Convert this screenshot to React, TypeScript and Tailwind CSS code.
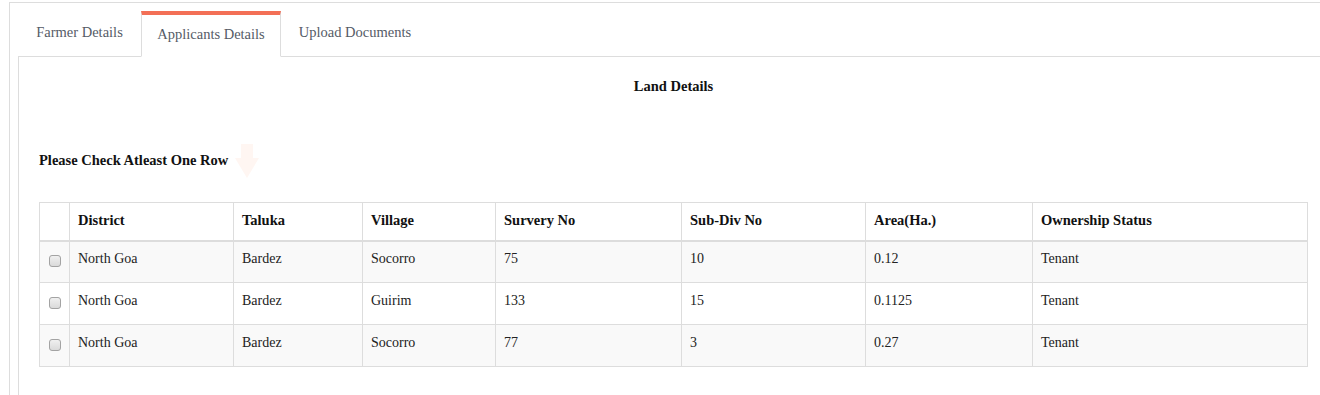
import React from "react";

const rows = [
  { district: "North Goa", taluka: "Bardez", village: "Socorro", survey: "75", subdiv: "10", area: "0.12", status: "Tenant" },
  { district: "North Goa", taluka: "Bardez", village: "Guirim", survey: "133", subdiv: "15", area: "0.1125", status: "Tenant" },
  { district: "North Goa", taluka: "Bardez", village: "Socorro", survey: "77", subdiv: "3", area: "0.27", status: "Tenant" },
];

const cols = [
  { label: "District", w: "w-[164px]" },
  { label: "Taluka", w: "w-[129px]" },
  { label: "Village", w: "w-[133px]" },
  { label: "Survery No", w: "w-[186px]" },
  { label: "Sub-Div No", w: "w-[184px]" },
  { label: "Area(Ha.)", w: "w-[167px]" },
  { label: "Ownership Status", w: "" },
];

const Checkbox = () => (
  <span className="inline-block h-[12px] w-[12px] rounded-[3px] border border-[#a3a3a3] bg-gradient-to-b from-[#f0f0f0] to-[#dadada] align-middle" />
);

export default function App() {
  return (
    <div className="h-[395px] w-[1320px] overflow-hidden bg-white pl-[9px] pt-[2px] font-['Liberation_Serif',serif]">
      <div className="h-[500px] w-[1330px] border-l border-t border-[#dddddd] pl-[8px] pt-[8px]">
        {/* tabs */}
        <div className="flex h-[46px] border-b border-[#dddddd] text-[14.5px] text-[#555b66]">
          <div className="flex h-[45px] w-[123px] items-center justify-center pb-[2px]">Farmer Details</div>
          <div className="-mb-px flex h-[46px] w-[140px] items-center justify-center border-x border-t-4 border-b border-[#dddddd] border-t-[#f36f56] border-b-white bg-white pb-[1px]">
            Applicants Details
          </div>
          <div className="flex h-[45px] w-[148px] items-center justify-center pb-[2px]">Upload Documents</div>
        </div>

        {/* panel */}
        <div className="h-[400px] border-l border-[#dddddd] pl-[20px]">
          <div className="w-[1269px] pt-[19px] text-center text-[14.5px] font-bold leading-[20px] text-[#111]">
            Land Details
          </div>

          <div className="mt-[54px] flex h-[20px] items-center">
            <span className="text-[14.5px] font-bold leading-[20px] text-[#111]">Please Check Atleast One Row</span>
            <svg width="26" height="36" viewBox="0 0 26 36" className="ml-[6px] mt-[4px]">
              <path d="M7 0 H19 V14 H25 L13 34 L1 14 H7 Z" fill="#fff6f2" />
            </svg>
          </div>

          <table className="mt-[32px] w-[1269px] border-collapse text-[14px] text-[#222]">
            <thead>
              <tr className="h-[38px]">
                <th className="w-[30px] border border-b-2 border-[#dddddd]" />
                {cols.map((c) => (
                  <th
                    key={c.label}
                    className={`${c.w} border border-b-2 border-[#dddddd] pl-[8px] text-left text-[14.5px] font-bold text-[#111]`}
                  >
                    {c.label}
                  </th>
                ))}
              </tr>
            </thead>
            <tbody>
              {rows.map((r, i) => (
                <tr key={i} className={`h-[42px] ${i % 2 === 0 ? "bg-[#f9f9f9]" : "bg-white"}`}>
                  <td className="border border-[#dddddd] pb-[4px] text-center">
                    <Checkbox />
                  </td>
                  {[r.district, r.taluka, r.village, r.survey, r.subdiv, r.area, r.status].map((v, j) => (
                    <td key={j} className="border border-[#dddddd] pb-[6px] pl-[8px] align-middle">
                      {v}
                    </td>
                  ))}
                </tr>
              ))}
            </tbody>
          </table>
        </div>
      </div>
    </div>
  );
}
